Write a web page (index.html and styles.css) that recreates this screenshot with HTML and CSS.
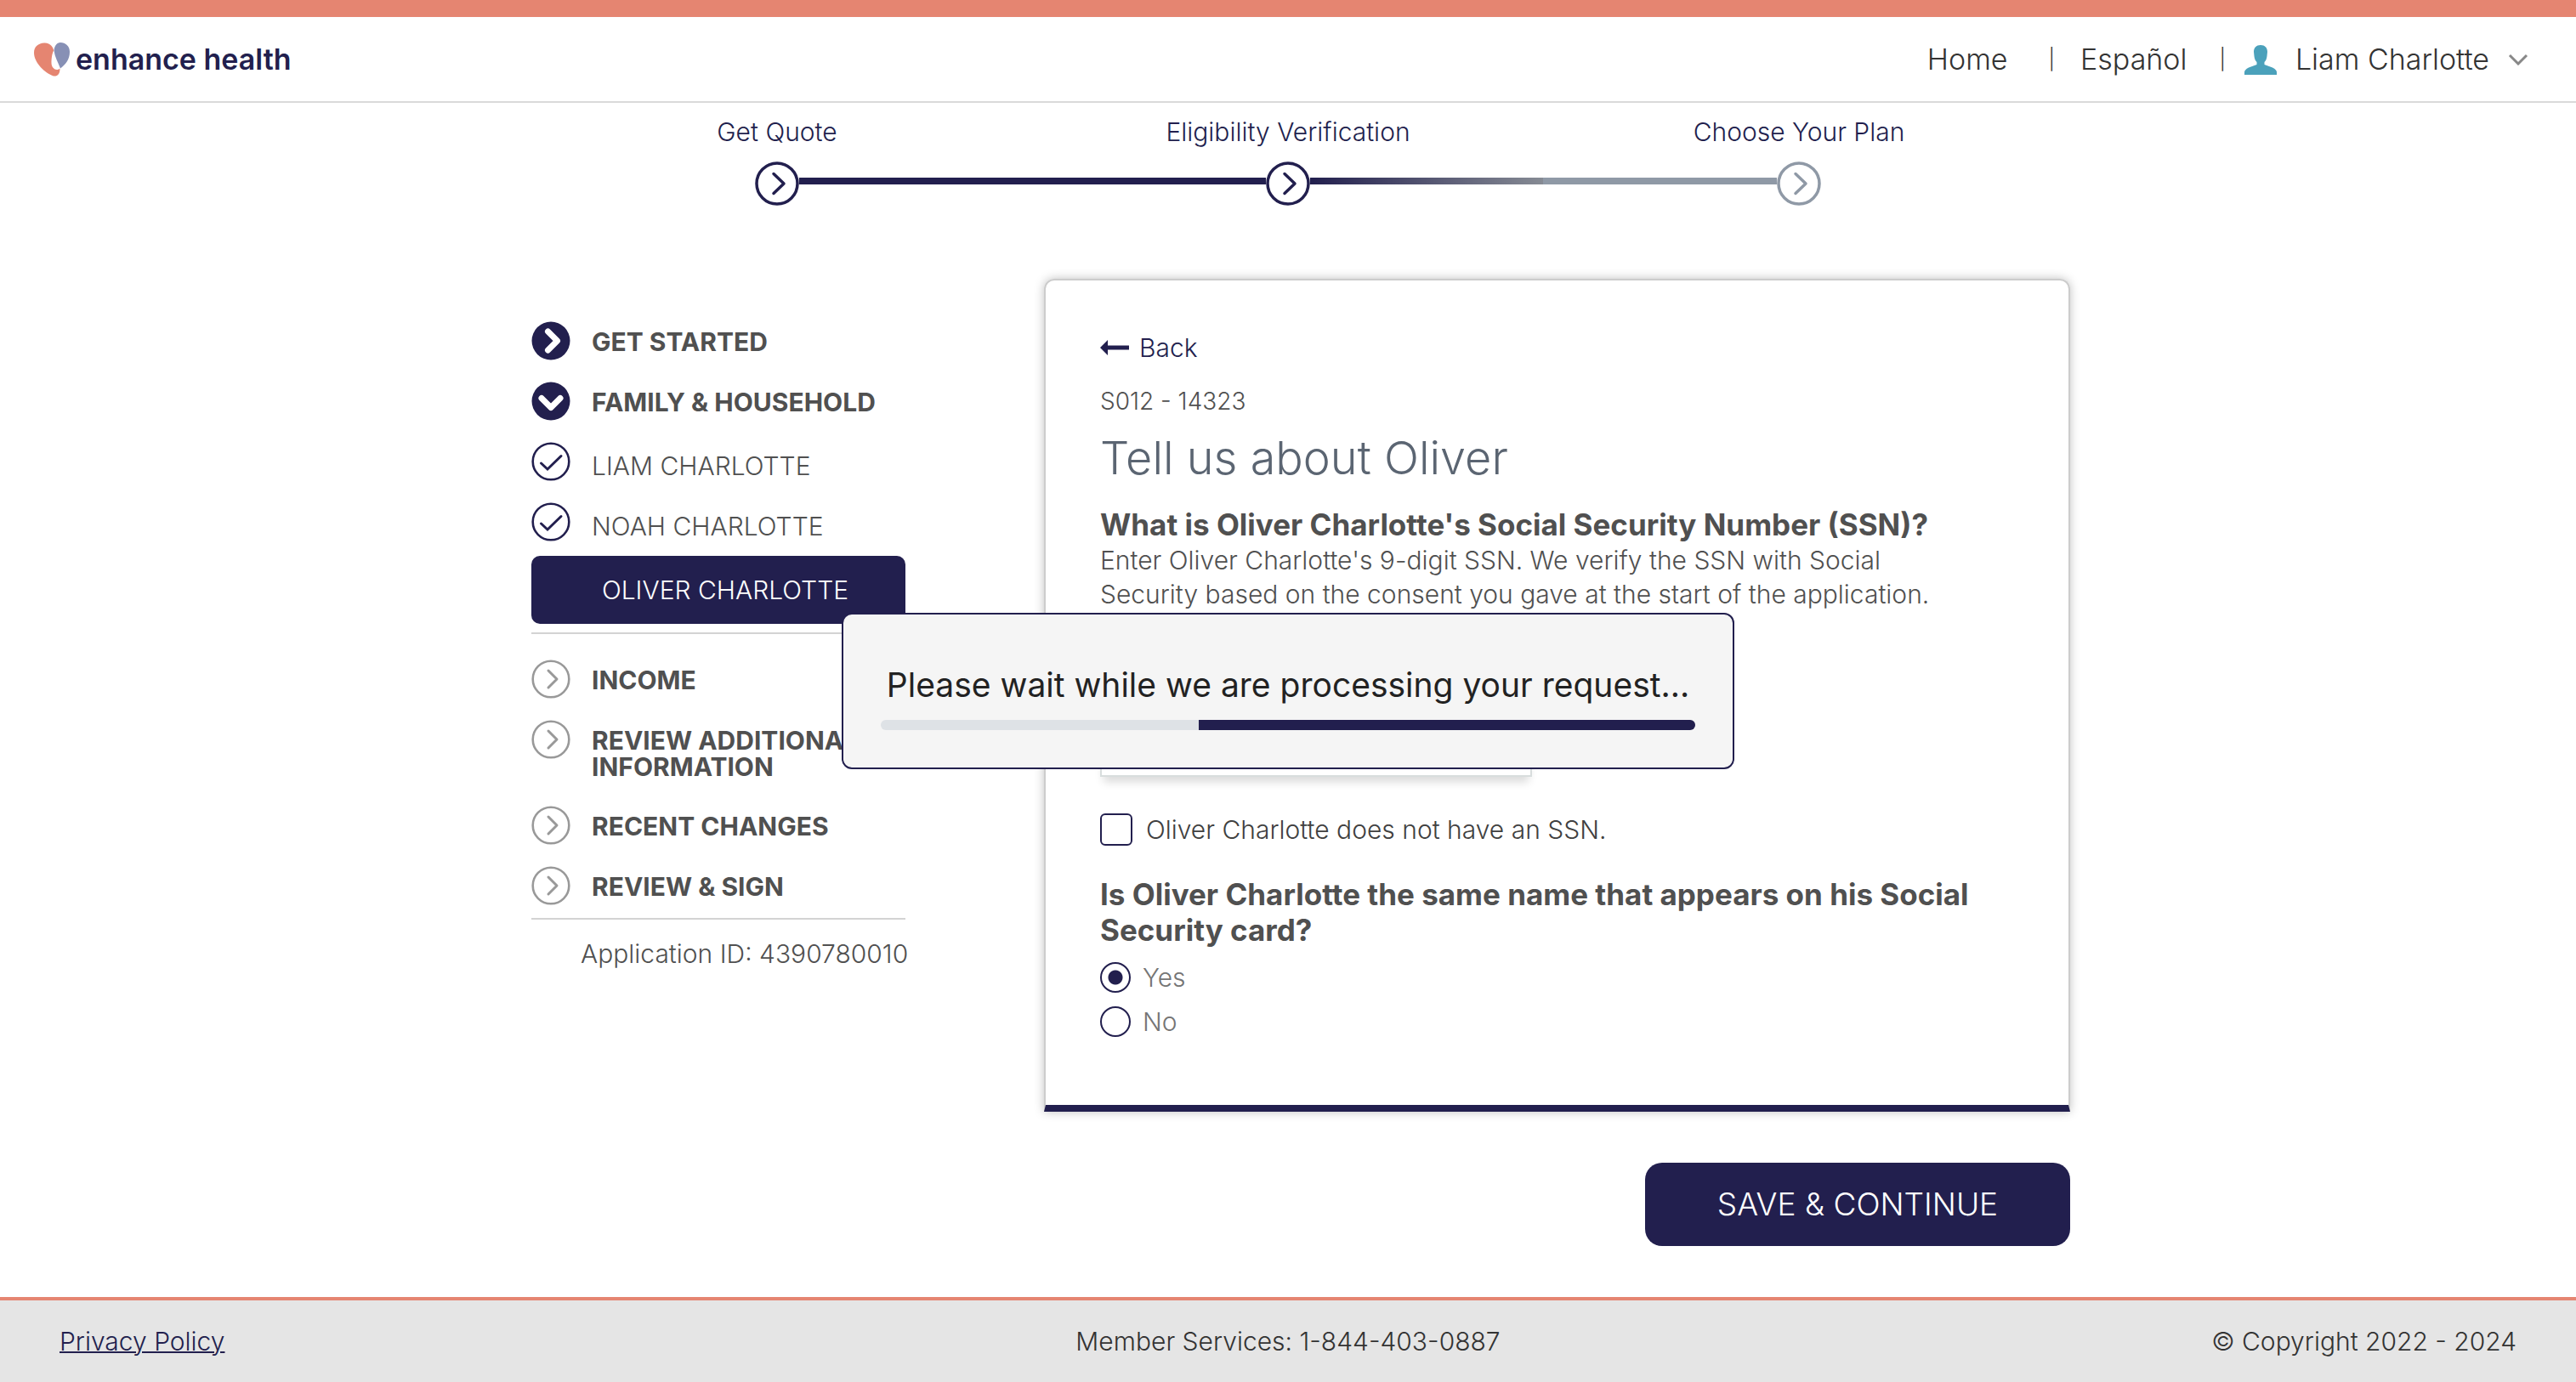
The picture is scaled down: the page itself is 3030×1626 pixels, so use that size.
FILE: index.html
```html
<!DOCTYPE html>
<html lang="en">
<head>
<meta charset="utf-8">
<meta name="viewport" content="width=device-width, initial-scale=1">
<title>enhance health</title>
<link rel="stylesheet" href="styles.css">
</head>
<body>
<svg class="sprite" aria-hidden="true">
  <symbol id="step" viewBox="0 0 52 52"><circle cx="26" cy="26" r="24" fill="#fff" stroke="currentColor" stroke-width="3.500"/><path d="M22 14.500L34 26L22 37.500" fill="none" stroke="currentColor" stroke-width="3.500" stroke-linecap="round" stroke-linejoin="round"/></symbol>
  <symbol id="next" viewBox="0 0 46 46"><circle cx="23" cy="23" r="21.300" fill="none" stroke="currentColor" stroke-width="2.600"/><path d="M20 13L30 23L20 33" fill="none" stroke="currentColor" stroke-width="3" stroke-linecap="round" stroke-linejoin="round"/></symbol>
  <symbol id="open" viewBox="0 0 46 46"><circle cx="23" cy="23" r="22.500" fill="currentColor"/><path d="M19.500 12L30.500 23L19.500 34" fill="none" stroke="#fff" stroke-width="7" stroke-linecap="round" stroke-linejoin="round"/></symbol>
  <symbol id="down" viewBox="0 0 46 46"><circle cx="23" cy="23" r="22.500" fill="currentColor"/><path d="M12 19.500L23 30.500L34 19.500" fill="none" stroke="#fff" stroke-width="7" stroke-linecap="round" stroke-linejoin="round"/></symbol>
  <symbol id="done" viewBox="0 0 46 46"><circle cx="23" cy="23" r="21.300" fill="none" stroke="currentColor" stroke-width="2.600"/><path d="M11.500 25L19 32L35 16.500" fill="none" stroke="currentColor" stroke-width="3" stroke-linecap="round"/></symbol>
</svg>

<header class="header">
  <a class="brand" href="#">
    <svg class="brand-mark" viewBox="0 0 42 40" aria-hidden="true"><path d="M12 .5C19 0 23 6 23.200 9.500C21 13 20.500 20 20.500 24C20.500 31 27 34 30.500 30.500C30.500 37 28 40 23 39.500C13 36 0 24 0 12C0 5 5 .8 12 .5Z" fill="#e58571"/><path d="M31 0C37 0 42 4 42 11C42 20 37 26 31 30.500C28 23 24.500 17 23.500 9.500C24 4 27 0 31 0Z" fill="#8790b5"/></svg>
    <span>enhance health</span>
  </a>
  <nav class="topnav" aria-label="Account">
    <a href="#">Home</a><span class="bar">|</span>
    <a href="#">Español</a><span class="bar">|</span>
    <button class="user" type="button">
      <svg class="user-icon" viewBox="0 0 38 36" aria-hidden="true"><path d="M19 1C24 1 27 4 27 9L26.500 14Q26 19 23.500 21V24L33 27.500Q38 30 38 33V36H0V33Q0 30 5 27.500L14.500 24V21Q12 19 11.500 14L11 9C11 4 14 1 19 1Z" fill="#4ba1bb"/></svg>
      <span>Liam Charlotte</span>
      <svg class="user-caret" viewBox="0 0 24 14" aria-hidden="true"><path d="M2 2L12 12L22 2" fill="none" stroke="#888" stroke-width="3"/></svg>
    </button>
  </nav>
</header>

<ol class="steps">
  <li class="step step-full"><span>Get Quote</span><svg><use href="#step"/></svg></li>
  <li class="step step-half"><span>Eligibility Verification</span><svg><use href="#step"/></svg></li>
  <li class="step step-last"><span>Choose Your Plan</span><svg><use href="#step"/></svg></li>
</ol>

<main class="main">
  <nav class="side" aria-label="Application">
    <ul class="side-list">
      <li><a class="item" href="#"><svg><use href="#open"/></svg><span>GET STARTED</span></a></li>
      <li><a class="item" href="#"><svg><use href="#down"/></svg><span>FAMILY &amp; HOUSEHOLD</span></a></li>
      <li><a class="item person" href="#"><svg><use href="#done"/></svg><span>LIAM CHARLOTTE</span></a></li>
      <li><a class="item person" href="#"><svg><use href="#done"/></svg><span>NOAH CHARLOTTE</span></a></li>
    </ul>
    <a class="current" href="#" aria-current="page">OLIVER CHARLOTTE</a>
    <ul class="side-list later">
      <li><a class="item" href="#"><svg><use href="#next"/></svg><span>INCOME</span></a></li>
      <li><a class="item" href="#"><svg><use href="#next"/></svg><span>REVIEW ADDITIONAL INFORMATION</span></a></li>
      <li><a class="item" href="#"><svg><use href="#next"/></svg><span>RECENT CHANGES</span></a></li>
      <li><a class="item" href="#"><svg><use href="#next"/></svg><span>REVIEW &amp; SIGN</span></a></li>
    </ul>
    <p class="app-id">Application ID: 4390780010</p>
  </nav>

  <form class="form">
    <section class="card">
      <a class="back" href="#"><svg viewBox="0 0 34 18" aria-hidden="true"><path d="M9 0V18L0 9Z M8 6.500H34V11.500H8Z" fill="currentColor"/></svg>Back</a>
      <p class="code">S012 - 14323</p>
      <h1 class="title">Tell us about Oliver</h1>
      <h2 class="question" id="ssn-question">What is Oliver Charlotte's Social Security Number (SSN)?</h2>
      <p class="help">Enter Oliver Charlotte's 9-digit SSN. We verify the SSN with Social Security based on the consent you gave at the start of the application.</p>
      <input class="ssn" type="text" inputmode="numeric" aria-labelledby="ssn-question">
      <label class="check"><input type="checkbox"><span>Oliver Charlotte does not have an SSN.</span></label>
      <fieldset class="choices">
        <legend class="question">Is Oliver Charlotte the same name that appears on his Social Security card?</legend>
        <label class="radio"><input type="radio" name="same-name" checked><span>Yes</span></label>
        <label class="radio"><input type="radio" name="same-name"><span>No</span></label>
      </fieldset>
    </section>
    <button class="save" type="submit">SAVE &amp; CONTINUE</button>
  </form>
</main>

<footer class="footer">
  <a href="#">Privacy Policy</a>
  <span>Member Services: 1-844-403-0887</span>
  <span>© Copyright 2022 - 2024</span>
</footer>

<div class="overlay">
  <div class="dialog" role="dialog" aria-labelledby="wait">
    <p id="wait">Please wait while we are processing your request...</p>
    <div class="progress"><div class="progress-fill"></div></div>
  </div>
</div>
</body>
</html>
```
FILE: styles.css
```css
:root {
  --navy: #221f4e;
  --coral: #e58571;
  --text: #505050;
  --line: #d3d3d3;
}

* { box-sizing: border-box; }

body {
  margin: 0;
  min-height: 100vh;
  display: flex;
  flex-direction: column;
  border-top: 20px solid var(--coral);
  background: #fff;
  color: var(--text);
  font: 300 30px/40px Inter, "Open Sans", sans-serif;
}

a { color: inherit; text-decoration: none; }
p, h1, h2, ul, ol { margin: 0; padding: 0; }
ul, ol { list-style: none; }
button { border: 0; font: inherit; cursor: pointer; }
.sprite { display: none; }

/* Header */
.header {
  display: flex;
  justify-content: space-between;
  align-items: center;
  min-height: 101px;
  padding: 0 56px 0 40px;
  border-bottom: 2px solid #dadada;
  color: #333;
  font-size: 34px;
}
.brand {
  display: flex;
  align-items: center;
  gap: 7px;
  color: var(--navy);
  font-size: 34px;
  font-weight: 600;
}
.brand-mark { width: 42px; height: 40px; }
.topnav { display: flex; align-items: center; }
.bar { padding: 0 30px 0 48px; font-size: 24px; }
.bar:nth-of-type(2) { padding: 0 22px 0 38px; }
.user {
  display: flex;
  align-items: center;
  gap: 22px;
  padding: 0;
  background: none;
  color: inherit;
}
.user-icon { width: 38px; height: 36px; }
.user-caret { width: 24px; height: 14px; }

/* Progress steps */
.steps {
  display: grid;
  grid-template-columns: repeat(3, 1fr);
  width: 1803px;
  max-width: 100%;
  margin: 14px auto 0;
  color: var(--navy);
}
.step {
  position: relative;
  display: flex;
  flex-direction: column;
  align-items: center;
  gap: 15px;
}
.step svg { width: 52px; height: 52px; }
.step-full::after, .step-half::after {
  content: "";
  position: absolute;
  left: calc(50% + 26px);
  right: calc(26px - 50%);
  bottom: 25px;
  height: 8px;
  background: var(--navy);
}
.step-half::after {
  background: linear-gradient(90deg, var(--navy), #868b94 50%, #8f99a6 50%);
}
.step-last svg { color: #8f99a6; }

/* Two-column body */
.main {
  display: grid;
  grid-template-columns: 440px 1fr;
  column-gap: 163px;
  width: 100%;
  max-width: 1840px;
  margin: 86px auto 58px;
  padding-left: 30px;
}
.side { padding-top: 50px; }
.side-list { display: grid; gap: 25px; }
.item {
  display: flex;
  gap: 25px;
  font-weight: 700;
  line-height: 31px;
  color: #505050;
}
.item svg { flex: none; width: 46px; height: 46px; color: var(--navy); }
.item span { padding: 9px 0 5px; }
.item.person { font-weight: 300; }
.item.person span { padding: 13px 0 2px; }
.current {
  display: block;
  margin: 17px 0 10px;
  padding: 20px 0 20px 16px;
  border-radius: 10px;
  background: var(--navy);
  color: #fff;
  font-weight: 300;
  text-align: center;
}
.later {
  padding: 30px 0 15px;
  border: solid var(--line);
  border-width: 2px 0;
}
.later svg { color: #999; }
.app-id { padding: 20px 0 0 58px; white-space: nowrap; }

/* Form card */
.form { display: flex; flex-direction: column; }
.card {
  display: flex;
  flex-direction: column;
  align-items: flex-start;
  padding: 59px 64px 80px;
  border: 2px solid #ccc;
  border-bottom: 8px solid var(--navy);
  border-radius: 12px 12px 0 0;
  box-shadow: 0 0 12px rgba(0, 0, 0, .25);
}
.back {
  display: flex;
  align-items: center;
  gap: 12px;
  color: var(--navy);
}
.back svg { width: 34px; height: 18px; }
.code { margin-top: 23px; font-size: 28px; }
.title {
  margin-top: 17px;
  color: #5b6572;
  font-size: 54px;
  font-weight: 300;
  line-height: 60px;
}
.question {
  margin: 27px 0 1px;
  padding: 0;
  font-size: 35px;
  font-weight: 700;
  line-height: 42px;
}
.help { max-width: 1030px; }
.ssn {
  width: 508px;
  max-width: 100%;
  height: 84px;
  margin-top: 111px;
  padding: 0 20px;
  border: 2px solid #d8dddd;
  box-shadow: 0 10px 10px -4px rgba(0, 0, 0, .15);
  font: inherit;
}
.check, .radio { display: flex; align-items: center; }
.check {
  gap: 16px;
  margin-top: 43px;
  color: #404040;
  line-height: 38px;
}
.check input, .radio input {
  appearance: none;
  flex: none;
  width: 38px;
  height: 38px;
  margin: 0;
  border: 2px solid var(--navy);
  border-radius: 6px;
  background: #fff;
}
.choices {
  display: grid;
  gap: 16px;
  margin: 36px 0 0;
  padding: 0;
  border: 0;
}
.choices .question { margin: 0 0 17px; }
.radio { gap: 14px; line-height: 36px; color: #757575; }
.radio input { width: 36px; height: 36px; border-radius: 50%; }
.radio input:checked { background: radial-gradient(circle, var(--navy) 8px, #fff 9px); }
.save {
  align-self: flex-end;
  width: 500px;
  max-width: 100%;
  margin-top: 60px;
  padding: 29px 0;
  border-radius: 20px;
  background: var(--navy);
  color: #fff;
  font-size: 37px;
  line-height: 40px;
}

/* Footer */
.footer {
  display: grid;
  grid-template-columns: 1fr auto 1fr;
  align-items: center;
  min-height: 100px;
  margin-top: auto;
  padding: 0 70px;
  border-top: 4px solid var(--coral);
  background: #e5e5e5;
  color: #333;
}
.footer a {
  justify-self: start;
  color: var(--navy);
  text-decoration: underline;
  text-decoration-thickness: 2px;
}
.footer span:last-child { justify-self: end; }

/* Processing dialog */
.overlay {
  position: fixed;
  inset: 0;
  display: flex;
  align-items: center;
  justify-content: center;
}
.dialog {
  width: 1050px;
  max-width: 100%;
  padding: 60px 44px 44px;
  border: 2px solid var(--navy);
  border-radius: 12px;
  background: #f5f5f5;
  color: #222;
  font-size: 39px;
  font-weight: 400;
  line-height: 46px;
  text-align: center;
}
.progress {
  display: flex;
  justify-content: flex-end;
  height: 12px;
  margin-top: 18px;
  border-radius: 6px;
  background: #dee2e6;
  overflow: hidden;
}
.progress-fill { width: 61%; background: var(--navy); }
```
